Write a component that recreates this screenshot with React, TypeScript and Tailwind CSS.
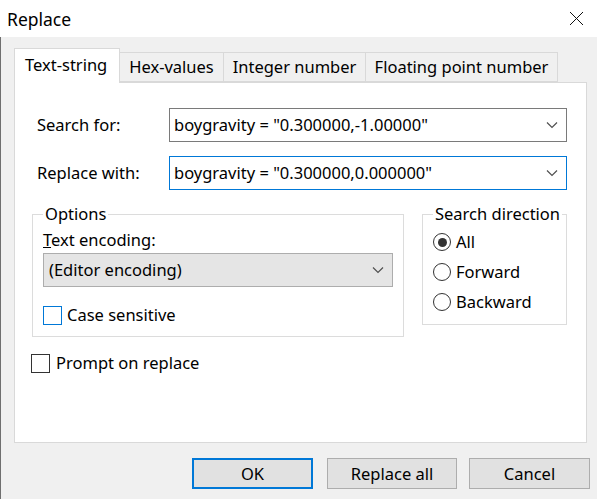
import React from "react";

const Chevron = () => (
  <svg width="12" height="8" viewBox="0 0 12 8" className="shrink-0">
    <path d="M1 1.5 L6 6.5 L11 1.5" fill="none" stroke="#505050" strokeWidth="1.2" />
  </svg>
);

const Radio = ({ checked, label }: { checked?: boolean; label: string }) => (
  <div className="flex items-center h-[30px]">
    <div className="w-[18px] h-[18px] rounded-full border border-[#333333] bg-white flex items-center justify-center">
      {checked && <div className="w-[9px] h-[9px] rounded-full bg-[#333333]" />}
    </div>
    <span className="ml-[5px]">{label}</span>
  </div>
);

export default function App() {
  return (
    <div
      className="w-[597px] h-[499px] bg-[#f0f0f0] text-black text-[16.5px] leading-[22px] flex flex-col overflow-hidden"
      style={{ fontFamily: '"Noto Sans", "Open Sans", sans-serif' }}
    >
      {/* title bar */}
      <div className="h-[37px] bg-white flex items-center justify-between pl-[7px] pr-[13px] shrink-0">
        <span className="text-[17.5px]">Replace</span>
        <svg width="15" height="15" viewBox="0 0 15 15">
          <path d="M1 1 L14 14 M14 1 L1 14" stroke="#111" strokeWidth="1" />
        </svg>
      </div>
      {/* body */}
      <div className="flex-1 border-l border-[#6f6f6f] pl-[13px] pt-[11px] flex flex-col">
        {/* tabs */}
        <div className="flex items-end h-[34px] relative z-10">
          <div className="w-[106px] h-[35px] bg-white border border-b-0 border-[#d9d9d9] flex items-center pl-[10px] -mb-px pb-[2px]">
            Text-string
          </div>
          <div className="w-[104px] h-[30px] border border-l-0 border-[#d9d9d9] flex items-center justify-center bg-[#f0f0f0]">
            Hex-values
          </div>
          <div className="w-[142px] h-[30px] border border-l-0 border-[#d9d9d9] flex items-center justify-center bg-[#f0f0f0]">
            Integer number
          </div>
          <div className="w-[192px] h-[30px] border border-l-0 border-[#d9d9d9] flex items-center justify-center bg-[#f0f0f0]">
            Floating point number
          </div>
        </div>
        {/* panel */}
        <div className="w-[573px] h-[361px] bg-white border border-[#d9d9d9] flex flex-col pl-[16px] pt-[25px]">
          <div className="flex items-center">
            <span className="w-[138px] pl-[6px]">Search for:</span>
            <div className="w-[398px] h-[34px] border border-[#7a7a7a] flex items-center justify-between pl-[4px] pr-[8px]">
              <span>boygravity = "0.300000,-1.00000"</span>
              <Chevron />
            </div>
          </div>
          <div className="flex items-center mt-[14px]">
            <span className="w-[138px] pl-[6px]">Replace with:</span>
            <div className="w-[398px] h-[34px] border border-[#0078d7] flex items-center justify-between pl-[4px] pr-[8px]">
              <span>boygravity = "0.300000,0.000000"</span>
              <Chevron />
            </div>
          </div>
          <div className="flex mt-[14px]">
            <fieldset className="w-[371px] h-[133px] border border-[#dcdcdc] px-[10px] ml-[1px]">
              <legend className="px-[2px] leading-[20px]">Options</legend>
              <div className="leading-[20px] mt-[6px]">
                <u>T</u>ext encoding:
              </div>
              <div className="w-[350px] h-[34px] mt-[3px] bg-[#e5e5e5] border border-[#adadad] flex items-center justify-between pl-[5px] pr-[8px]">
                <span>(Editor encoding)</span>
                <Chevron />
              </div>
              <div className="flex items-center h-[20px] mt-[18px]">
                <div className="w-[19px] h-[19px] border border-[#0078d7] bg-white" />
                <span className="ml-[5px]">Case sensitive</span>
              </div>
            </fieldset>
            <fieldset className="w-[145px] h-[121px] border border-[#dcdcdc] ml-[18px] pl-[10px]">
              <legend className="px-[2px] leading-[20px]">Search direction</legend>
              <div className="mt-[3px]">
                <Radio checked label="All" />
                <Radio label="Forward" />
                <Radio label="Backward" />
              </div>
            </fieldset>
          </div>
          <div className="flex items-center h-[20px] mt-[16px]">
            <div className="w-[19px] h-[19px] border border-[#333333] bg-white" />
            <span className="ml-[6px]">Prompt on replace</span>
          </div>
        </div>
        {/* buttons */}
        <div className="flex mt-[15px] pl-[178px]">
          <div className="w-[121px] h-[31px] bg-[#e1e1e1] border-2 border-[#0078d7] flex items-center justify-center">
            OK
          </div>
          <div className="w-[130px] h-[31px] bg-[#e1e1e1] border border-[#adadad] flex items-center justify-center ml-[14px]">
            Replace all
          </div>
          <div className="w-[121px] h-[31px] bg-[#e1e1e1] border border-[#adadad] flex items-center justify-center ml-[12px]">
            Cancel
          </div>
        </div>
      </div>
    </div>
  );
}
